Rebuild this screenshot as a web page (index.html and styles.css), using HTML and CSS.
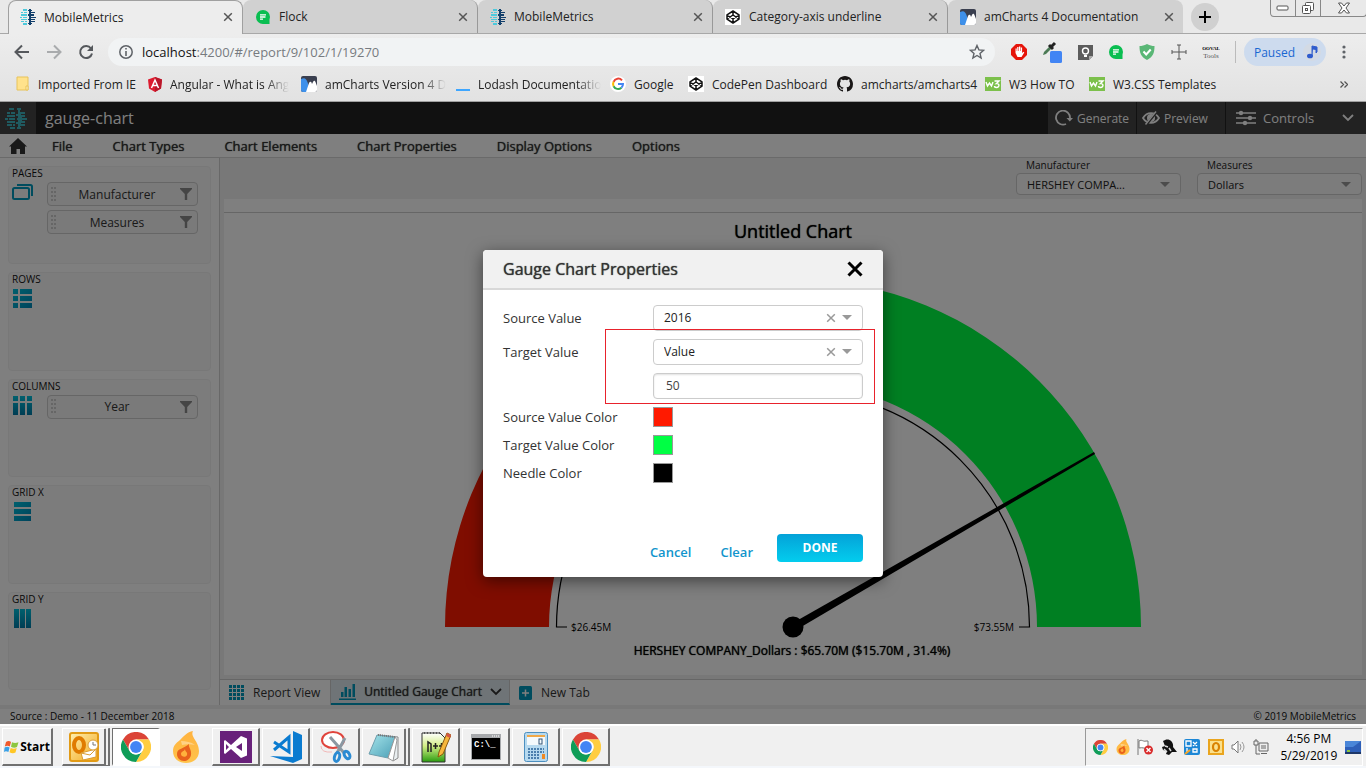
FILE: index.html
```html
<!DOCTYPE html>
<html lang="en">
<head>
<meta charset="utf-8">
<title>MobileMetrics</title>
<link rel="stylesheet" href="styles.css">
</head>
<body>
<svg class="defs" aria-hidden="true">
  <defs>
    <linearGradient id="teal" x1="0" y1="0" x2="1" y2="1"><stop offset="0" stop-color="#00c0dc"/><stop offset="1" stop-color="#0088b8"/></linearGradient>
    <linearGradient id="tealDown" x1="0" y1="0" x2="0" y2="1"><stop offset="0" stop-color="#00c0dc"/><stop offset="1" stop-color="#007ba8"/></linearGradient>
    <linearGradient id="flame" x1="0" y1="0" x2="0" y2="1"><stop offset="0" stop-color="#ffb340"/><stop offset="1" stop-color="#ffc34a"/></linearGradient>
    <linearGradient id="pad" x1="0" y1="0" x2="1" y2="1"><stop offset="0" stop-color="#a5e4ea"/><stop offset="1" stop-color="#4b9fb6"/></linearGradient>
    <linearGradient id="npp" x1="0" y1="0" x2="0" y2="1"><stop offset="0" stop-color="#fff"/><stop offset=".45" stop-color="#d2ee84"/><stop offset="1" stop-color="#2a9c10"/></linearGradient>
    <linearGradient id="gold" x1="0" y1="0" x2="1" y2="1"><stop offset="0" stop-color="#fff0b0"/><stop offset="1" stop-color="#f2a71b"/></linearGradient>
  </defs>
  <symbol id="mm" viewBox="0 0 16 16">
    <g fill="#4dc9dc"><path d="M3 0h4v2H3zM1 3h2v1H1zM4 3h3v1H4zM1 5h6v2H1zM0 8h2v1H0zM3 8h4v1H3zM1 10h6v1H1zM1 12h3v1H1zM5 12h2v1H5zM3 14h4v2H3z"/></g>
    <g fill="#123f6b"><path d="M9 0h2v16H9zM8 1h4v1H8zM11 3h4v1h-4zM8 5h6v2H8zM10 8h6v1h-6zM8 10h7v1H8zM11 12h4v1h-4zM8 14h4v1H8z"/></g>
  </symbol>
  <symbol id="mmTeal" viewBox="0 0 22 21">
    <path fill="#3fb4c0" d="M4 0h5v2H4zM2 4h3v2H2zM6 4h4v2H6zM2 7h8v2H2zM0 10h3v2H0zM4 10h6v2H4zM2 13h8v2H2zM2 16h5v2H2zM8 16h2v2H8zM5 19h5v2H5zM12 0h4v2h-1v2h5v2h-4v1h4v2h-3v1h5v2h-5v1h3v2h-4v1h4v2h-5v1h1v2h-4v-2h1v-3h-2v-2h2v-2h-1v-2h1V8h-2V6h2V2h-1z"/>
  </symbol>
  <symbol id="flock" viewBox="0 0 16 16"><path fill="#0abe51" d="M8 1a7 7 0 1 1 0 14A7 7 0 0 1 8 1zM14.500 9v6H8z"/><path stroke="#fff" stroke-width="1.300" fill="none" d="M5 5.800h6M5 8h5.500M5 10.200h3"/></symbol>
  <symbol id="codepen" viewBox="0 0 16 16"><path fill="#fff" d="M0 0h16v16H0z"/><g fill="none" stroke="#111" stroke-width="1.500" stroke-linejoin="round"><path d="M8 2l6 3.800v4.400L8 14l-6-3.800V5.800zM2 6l6 4 6-4M2 10l6-4 6 4M8 2v4M8 10v4"/></g></symbol>
  <symbol id="am" viewBox="0 0 16 16"><rect width="16" height="16" rx="2" fill="#3a3f4f"/><path d="M0 3c4-2 5 0 6 2s2 6 2.500 11H2a2 2 0 0 1-2-2z" fill="#3e90ea"/><path d="M5 16l3-9c1-2 2-1.500 2.500-.5L11 8l1-2c1-2 2-1 2.500 0L16 10v4a2 2 0 0 1-2 2z" fill="#fff"/></symbol>
  <symbol id="w3" viewBox="0 0 16 14"><rect width="16" height="14" fill="#7cc04b"/><path d="M1 5l1.500 4L4.500 6l2 3L8 5M9.500 4H14l-2.500 2.500c3-.5 3.500 4 0 4-1 0-2-.6-2-1.500" fill="none" stroke="#fff" stroke-width="1.400"/></symbol>
  <symbol id="x" viewBox="0 0 10 10"><path d="M1.200 1.200l7.600 7.600M8.800 1.200L1.200 8.800" stroke="currentColor" stroke-width="1.500"/></symbol>
  <symbol id="caret" viewBox="0 0 10 5"><path d="M0 0h10L5 5z" fill="#999"/></symbol>
  <symbol id="chev" viewBox="0 0 12 8"><path d="M1 1l5 5 5-5" fill="none" stroke="currentColor" stroke-width="1.800"/></symbol>
  <symbol id="funnel" viewBox="0 0 12 12"><path d="M0 0h12v1L7.200 6v6H4.800V6L0 1z" fill="#8a8a8a"/></symbol>
  <symbol id="grip" viewBox="0 0 6 15"><path fill="#cdcdcd" d="M0 0h2v2H0zM3 0h2v2H3zM0 4h2v2H0zM3 4h2v2H3zM0 8h2v2H0zM3 8h2v2H3zM0 12h2v2H0zM3 12h2v2H3z"/></symbol>
  <symbol id="chrome" viewBox="0 0 32 32"><path fill="#db4437" d="M2.100 8A16 16 0 0 1 29.900 8H16a8 8 0 0 0-7.500 5z"/><path fill="#db4437" d="M2.100 8L9 20l7-12z"/><path fill="#ffcd40" d="M29.900 8A16 16 0 0 1 16 32l7-12a8 8 0 0 0 0-8.500L16 8z"/><path fill="#0f9d58" d="M2.100 8A16 16 0 0 0 16 32l6.500-11.500A8 8 0 0 1 9 20z"/><circle cx="16" cy="16" r="8" fill="#fff"/><circle cx="16" cy="16" r="6.300" fill="#4285f4"/></symbol>
  <symbol id="fire" viewBox="0 0 26 32"><path fill="url(#flame)" d="M20 0c-3 6 6 10 6 20 0 8-6 12-13 12S0 28 0 20c0-5 3-8 7-11 4-4 7-8 13-9z"/><path fill="#fff" d="M8 10c5 0 10 1 14 4-4-1-9-1-13 0z" opacity=".35"/><path fill="#e8611c" d="M16 13c-1 3 3 6 2 11-1 4-4 6-7 6-4 0-7-3-7-7 0-6 7-5 12-10z"/><path fill="#ffb13d" d="M12 18c0 3 3 3 2 6-1 3-6 2-6-1s3-2 4-5z"/></symbol>
  <symbol id="outlook" viewBox="0 0 30 30"><rect x="1" y="1" width="28" height="28" rx="2" fill="url(#gold)" stroke="#e29b16" stroke-width="2"/><ellipse cx="10" cy="13" rx="5" ry="7" fill="none" stroke="#e07b00" stroke-width="4"/><path d="M12 21l15-4v8l-13 3z" fill="#fff" stroke="#d99c32"/><path d="M12 21l9 2 6-6" fill="none" stroke="#d99c32"/><circle cx="24" cy="13" r="5" fill="#fff" stroke="#d9a040"/><path d="M24 10v3h3" stroke="#777" fill="none"/></symbol>
</svg>

<div class="browser">
  <div class="tabstrip">
    <div class="tab tab-active"><svg class="i16"><use href="#mm"/></svg><span>MobileMetrics</span><button class="close" aria-label="Close tab"><svg class="i10"><use href="#x"/></svg></button></div>
    <div class="tab"><svg class="i16"><use href="#flock"/></svg><span>Flock</span><button class="close" aria-label="Close tab"><svg class="i10"><use href="#x"/></svg></button></div>
    <div class="tab"><svg class="i16"><use href="#mm"/></svg><span>MobileMetrics</span><button class="close" aria-label="Close tab"><svg class="i10"><use href="#x"/></svg></button></div>
    <div class="tab"><svg class="i16"><use href="#codepen"/></svg><span>Category-axis underline</span><button class="close" aria-label="Close tab"><svg class="i10"><use href="#x"/></svg></button></div>
    <div class="tab tab-last"><svg class="i16"><use href="#am"/></svg><span>amCharts 4 Documentation</span><button class="close" aria-label="Close tab"><svg class="i10"><use href="#x"/></svg></button></div>
    <button class="newtab" aria-label="New tab"><svg width="12" height="12" viewBox="0 0 12 12"><path d="M6 0v12M0 6h12" stroke="#000" stroke-width="2"/></svg></button>
    <div class="winbtns">
      <button aria-label="Minimize"><svg width="14" height="6" viewBox="0 0 14 6"><rect x="1" y="1" width="11" height="4" rx="1" fill="#fff" stroke="#555"/></svg></button>
      <button aria-label="Restore"><svg width="14" height="14" viewBox="0 0 14 14"><g fill="#fff" stroke="#555"><rect x="4.500" y="1.500" width="8" height="8" rx="1"/><rect x="1.500" y="4.500" width="8" height="8" rx="1"/><rect x="4.500" y="7.500" width="2" height="2"/></g></svg></button>
      <button class="winclose" aria-label="Close"><svg width="14" height="12" viewBox="0 0 14 12"><path d="M1.500 1h3L7 4l2.500-3h3L9 6l3.500 5h-3L7 8l-2.500 3h-3L5 6z" fill="#fff" stroke="#555"/></svg></button>
    </div>
  </div>

  <div class="navbar">
    <button class="nav" aria-label="Back"><svg width="16" height="16" viewBox="0 0 16 16"><path d="M15 8H2M8 1.500L1.500 8 8 14.500" fill="none" stroke="#55585c" stroke-width="2"/></svg></button>
    <button class="nav" aria-label="Forward"><svg width="16" height="16" viewBox="0 0 16 16"><path d="M1 8h13M8 1.500L14.500 8 8 14.500" fill="none" stroke="#a9abad" stroke-width="2"/></svg></button>
    <button class="nav" aria-label="Reload"><svg width="16" height="16" viewBox="0 0 16 16"><path d="M13 4.500A6 6 0 1 0 14 9.500" fill="none" stroke="#55585c" stroke-width="2"/><path d="M15 1v6H9z" fill="#55585c"/></svg></button>
    <div class="omnibox">
      <svg width="14" height="14" viewBox="0 0 14 14"><circle cx="7" cy="7" r="6.200" fill="none" stroke="#5f6368" stroke-width="1.500"/><path d="M7 6v5M7 3v1.600" stroke="#5f6368" stroke-width="1.600"/></svg>
      <span class="url"><b>localhost</b>:4200/#/report/9/102/1/19270</span>
      <svg width="16" height="16" viewBox="0 0 16 16"><path d="M8 1.500l1.900 4.400 4.700.4-3.600 3.100 1.100 4.600L8 11.500 3.900 14 5 9.400 1.400 6.300l4.700-.4z" fill="none" stroke="#5f6368" stroke-width="1.400"/></svg>
    </div>
    <div class="exts">
      <svg width="16" height="16" viewBox="0 0 16 16"><path fill="#e6140a" d="M5 0h6l5 5v6l-5 5H5l-5-5V5z"/><path fill="#fff" d="M4.500 9V4.500h1.200V7h.5V3h1.300v4H8V2.500h1.300V7h.5V3.500h1.300V9l1.400-1.200.8.800L10.500 13H6.500z"/></svg>
      <svg width="20" height="22" viewBox="0 0 20 22"><path d="M1 14l1-3 6-6 2 2-6 6z" fill="#4b7a55"/><path d="M7 4l4 4M9 6l4-4" stroke="#222" stroke-width="3"/><rect x="8" y="10" width="12" height="12" rx="1.500" fill="#4285f4"/></svg>
      <svg width="15" height="15" viewBox="0 0 15 15"><path d="M0 0h15v11l-4 4H0z" fill="#5c5c5c"/><path d="M11 15v-4h4z" fill="#aaa"/><circle cx="7.500" cy="6" r="3" fill="none" stroke="#fff" stroke-width="1.400"/><path d="M6 10h3v2H6z" fill="#fff"/></svg>
      <svg class="i16"><use href="#flock"/></svg>
      <svg width="16" height="16" viewBox="0 0 16 16"><path d="M8 0c3 1.500 5 2 7.500 2 0 7-1.500 11-7.500 14C2 13 .5 9 .5 2 3 2 5 1.500 8 0z" fill="#5ab776"/><path d="M4.500 7.500l2.700 3 4.500-5" fill="none" stroke="#fff" stroke-width="2"/></svg>
      <svg width="16" height="16" viewBox="0 0 16 16"><path d="M8 1v14M1 8h14M6 1h4M6 15h4M1 6v4M15 6v4" stroke="#555" fill="none"/></svg>
      <svg width="18" height="16" viewBox="0 0 18 16"><text x="9" y="6" class="ext-a">OOVAL</text><text x="9" y="14" class="ext-b">Tools</text></svg>
    </div>
    <button class="paused">Paused<svg width="18" height="18" viewBox="0 0 18 18"><circle cx="9" cy="9" r="9" fill="#d3dae4"/><ellipse cx="7" cy="13" rx="3" ry="2.300" fill="#2f5ccd"/><path d="M9 13V3l5 1v5l-1 1V6.500L10 6" fill="#2f5ccd" stroke="#2f5ccd"/></svg></button>
    <button class="kebab" aria-label="Menu"><svg width="4" height="14" viewBox="0 0 4 14"><g fill="#5f6368"><circle cx="2" cy="2" r="1.600"/><circle cx="2" cy="7" r="1.600"/><circle cx="2" cy="12" r="1.600"/></g></svg></button>
  </div>

  <nav class="bookmarks">
    <a href="#"><svg width="14" height="16" viewBox="0 0 14 16"><path d="M1 1h11v13H1z" fill="#ffe28c" stroke="#e8c35a"/><path d="M10 10h2v4h-2z" fill="#fff3c4" stroke="#e8c35a"/></svg><span>Imported From IE</span></a>
    <a href="#"><svg width="14" height="15" viewBox="0 0 14 15"><path d="M7 0l7 2.500-1 9L7 15l-6-3.500-1-9z" fill="#dd1b2f"/><path d="M7 0l7 2.500-1 9L7 15z" fill="#b8172a"/><path d="M3.500 11L7 3l3.500 8M4.800 8.500h4.400" fill="none" stroke="#fff" stroke-width="1.500"/></svg><span class="fade">Angular - What is Ang</span></a>
    <a href="#"><svg class="i16"><use href="#am"/></svg><span class="fade">amCharts Version 4 D</span></a>
    <a href="#"><svg width="14" height="16" viewBox="0 0 14 16"><path d="M0 14h14" stroke="#3ea6ff" stroke-width="2"/></svg><span class="fade">Lodash Documentatio</span></a>
    <a href="#"><svg width="16" height="16" viewBox="0 0 16 16"><circle cx="8" cy="8" r="8" fill="#fff"/><g fill="none" stroke-width="2"><path d="M12 4.300A5 5 0 0 0 3.600 5.800" stroke="#ea4335"/><path d="M3.600 5.800a5 5 0 0 0 0 4.400" stroke="#fbbc05"/><path d="M3.600 10.200a5 5 0 0 0 7.800 1.500" stroke="#34a853"/><path d="M11.400 11.700A5 5 0 0 0 13 8H8" stroke="#4285f4"/></g></svg><span>Google</span></a>
    <a href="#"><svg class="i16"><use href="#codepen"/></svg><span>CodePen Dashboard</span></a>
    <a href="#"><svg width="16" height="16" viewBox="0 0 16 16"><path fill="#191717" d="M8 0C3.580 0 0 3.580 0 8c0 3.540 2.290 6.530 5.470 7.590.4.070.55-.17.55-.38 0-.19-.01-.82-.01-1.490-2.010.37-2.530-.49-2.690-.94-.09-.23-.48-.94-.82-1.130-.28-.15-.68-.52-.01-.53.63-.01 1.080.58 1.230.82.720 1.210 1.870.87 2.330.66.070-.52.280-.87.510-1.070-1.780-.2-3.640-.89-3.640-3.950 0-.87.310-1.590.82-2.150-.08-.2-.36-1.020.08-2.120 0 0 .67-.21 2.200.82a7.600 7.600 0 0 1 4 0c1.530-1.040 2.200-.82 2.200-.82.440 1.100.16 1.920.08 2.120.51.560.82 1.270.82 2.150 0 3.070-1.870 3.750-3.650 3.950.29.250.54.730.54 1.480 0 1.070-.01 1.930-.01 2.200 0 .21.150.46.550.38A8.010 8.010 0 0 0 16 8c0-4.420-3.580-8-8-8z"/></svg><span>amcharts/amcharts4</span></a>
    <a href="#"><svg width="16" height="14"><use href="#w3"/></svg><span>W3 How TO</span></a>
    <a href="#"><svg width="16" height="14"><use href="#w3"/></svg><span>W3.CSS Templates</span></a>
    <button class="more" aria-label="More bookmarks"><svg width="8" height="7" viewBox="0 0 8 7"><path d="M.5.500l3 3-3 3M4.500.500l3 3-3 3" fill="none" stroke="#555" stroke-width="1.300"/></svg></button>
  </nav>
</div>

<div class="app">
  <header class="topbar">
    <div class="logo"><svg width="22" height="21"><use href="#mmTeal"/></svg></div>
    <h1>gauge-chart</h1>
    <button class="tb"><svg width="18" height="16" viewBox="0 0 18 16"><path d="M11 14A7 7 0 1 1 15 8" fill="none" stroke="currentColor" stroke-width="1.800"/><path d="M11.500 8H18l-3.200 3.500z" fill="currentColor"/></svg>Generate</button>
    <button class="tb tb-preview"><svg width="18" height="14" viewBox="0 0 18 14"><path d="M1 7c4-6.500 12-6.500 16 0-4 6.500-12 6.500-16 0z" fill="none" stroke="currentColor" stroke-width="1.800"/><circle cx="9" cy="7" r="4" fill="currentColor"/><path d="M3.500 14.500L15.500 0" stroke="#444" stroke-width="2.500"/><path d="M3.500 13.500L14 .5" stroke="currentColor" stroke-width="1.400"/></svg>Preview</button>
    <button class="tb tb-controls"><svg width="20" height="16" viewBox="0 0 20 16"><path d="M0 3h20M0 8h20M0 13h20" stroke="currentColor" stroke-width="1.500"/><g fill="currentColor"><circle cx="5" cy="3" r="2.200"/><circle cx="14" cy="8" r="2.200"/><circle cx="9" cy="13" r="2.200"/></g></svg><span>Controls</span><svg width="12" height="8"><use href="#chev"/></svg></button>
  </header>

  <nav class="menubar">
    <a class="home" href="#" aria-label="Home"><svg width="18" height="16" viewBox="0 0 18 16"><path d="M9 0l9 8.500h-2V16h-5v-5H7.500v5H2V8.500H0z" fill="#333"/></svg></a>
    <a href="#">File</a><a href="#">Chart Types</a><a href="#">Chart Elements</a><a href="#">Chart Properties</a><a href="#">Display Options</a><a href="#">Options</a>
  </nav>

  <div class="work">
    <aside class="sidebar">
      <section class="zone"><h2>PAGES</h2><div class="zone-body">
        <svg width="22" height="20" viewBox="0 0 22 20"><rect x="1" y="6" width="16" height="11" rx="1.500" fill="none" stroke="#0099bd" stroke-width="2"/><path d="M5 3h13.500a1.500 1.500 0 0 1 1.500 1.500V14" fill="none" stroke="#0099bd" stroke-width="2"/></svg>
        <div class="chips"><div class="chip"><svg width="6" height="15"><use href="#grip"/></svg><span>Manufacturer</span><svg width="12" height="12"><use href="#funnel"/></svg></div>
        <div class="chip"><svg width="6" height="15"><use href="#grip"/></svg><span>Measures</span><svg width="12" height="12"><use href="#funnel"/></svg></div></div>
      </div></section>
      <section class="zone"><h2>ROWS</h2><div class="zone-body">
        <svg width="22" height="20" viewBox="0 0 22 20"><path fill="url(#teal)" d="M1 1h5v5H1zM8 1h12v5H8zM1 8h5v5H1zM8 8h12v5H8zM1 15h5v5H1zM8 15h12v5H8z"/></svg>
      </div></section>
      <section class="zone"><h2>COLUMNS</h2><div class="zone-body">
        <svg width="22" height="20" viewBox="0 0 22 20"><path fill="url(#tealDown)" d="M1 1h5v5H1zM8 1h5v5H8zM15 1h5v5h-5zM1 8h5v12H1zM8 8h5v12H8zM15 8h5v12h-5z"/></svg>
        <div class="chips"><div class="chip"><svg width="6" height="15"><use href="#grip"/></svg><span>Year</span><svg width="12" height="12"><use href="#funnel"/></svg></div></div>
      </div></section>
      <section class="zone"><h2>GRID X</h2><div class="zone-body">
        <svg width="22" height="20" viewBox="0 0 22 20"><path fill="url(#teal)" d="M2 1h17v5H2zM2 8h17v5H2zM2 15h17v5H2z"/></svg>
      </div></section>
      <section class="zone"><h2>GRID Y</h2><div class="zone-body">
        <svg width="22" height="20" viewBox="0 0 22 20"><path fill="url(#tealDown)" d="M2 1h5v19H2zM8 1h5v19H8zM14 1h5v19h-5z"/></svg>
      </div></section>
    </aside>

    <main class="main">
      <div class="filters">
        <div class="filter"><label for="f1">Manufacturer</label><div class="pick"><select id="f1"><option>HERSHEY COMPA...</option></select><svg width="10" height="5"><use href="#caret"/></svg></div></div>
        <div class="filter"><label for="f2">Measures</label><div class="pick"><select id="f2"><option>Dollars</option></select><svg width="10" height="5"><use href="#caret"/></svg></div></div>
      </div>
      <div class="canvas">
        <svg class="gauge" viewBox="0 0 1138 462" role="img" aria-label="Gauge chart">
          <path d="M221 414A348 348 0 0 1 569 66V170A244 244 0 0 0 325 414z" fill="#ff1a00"/>
          <path d="M569 66A348 348 0 0 1 917 414H813A244 244 0 0 0 569 170z" fill="#00ff44"/>
          <path d="M343 414H332.500A236.500 236.500 0 0 1 805.500 414H795" fill="none" stroke="#000" stroke-width="1.200"/>
          <path d="M567 411L870 239l1 2L572 417z" fill="#000"/>
          <circle cx="569" cy="414" r="10.500"/>
          <text x="569" y="25" class="g-title">Untitled Chart</text>
          <text x="347" y="418" class="g-tick">$26.45M</text>
          <text x="790" y="418" class="g-tick g-end">$73.55M</text>
          <text x="568" y="442" class="g-note">HERSHEY COMPANY_Dollars : $65.70M ($15.70M , 31.4%)</text>
        </svg>
      </div>
      <div class="sheets">
        <button class="sheet"><svg width="15" height="15" viewBox="0 0 15 15"><path fill="#0099bd" d="M0 0h3v3H0zM4 0h3v3H4zM8 0h3v3H8zM12 0h3v3h-3zM0 4h3v3H0zM4 4h3v3H4zM8 4h3v3H8zM12 4h3v3h-3zM0 8h3v3H0zM4 8h3v3H4zM8 8h3v3H8zM12 8h3v3h-3zM0 12h3v3H0zM4 12h3v3H4zM8 12h3v3H8zM12 12h3v3h-3z"/></svg>Report View</button>
        <button class="sheet sheet-on"><svg width="17" height="16" viewBox="0 0 17 16"><path fill="#0099bd" d="M2 8h2.500v5H2zM5.500 3H8v10H5.500zM9.500 5H12v8H9.500zM13.500 0H16v13h-2.500zM0 14.500h17V16H0z"/></svg>Untitled Gauge Chart<svg width="12" height="8"><use href="#chev"/></svg></button>
        <button class="sheet sheet-new"><svg width="13" height="14" viewBox="0 0 13 14"><rect width="13" height="14" rx="1.500" fill="#0099bd"/><path d="M6.500 3.500v7M3 7h7" stroke="#fff" stroke-width="1.500"/></svg>New Tab</button>
      </div>
    </main>
  </div>
  <footer class="foot"><span>Source : Demo - 11 December 2018</span><span>© 2019 MobileMetrics</span></footer>

  <div class="overlay">
    <form class="modal" role="dialog" aria-labelledby="mt">
      <div class="modal-head"><h2 id="mt">Gauge Chart Properties</h2><button type="button" class="m-close" aria-label="Close"><svg width="16" height="16" viewBox="0 0 16 16"><path d="M1.500 1.500l13 13M14.500 1.500l-13 13" stroke="#000" stroke-width="3"/></svg></button></div>
      <div class="modal-body">
        <div class="row"><label for="sv">Source Value</label><div class="pick m-pick"><select id="sv"><option>2016</option></select><svg class="i10 clear"><use href="#x"/></svg><svg width="10" height="5"><use href="#caret"/></svg></div></div>
        <div class="row"><label for="tv">Target Value</label><div class="pick m-pick"><select id="tv"><option>Value</option></select><svg class="i10 clear"><use href="#x"/></svg><svg width="10" height="5"><use href="#caret"/></svg></div></div>
        <div class="row"><span></span><input class="num" type="text" value="50" aria-label="Target number"></div>
        <div class="row row-color"><label for="c1">Source Value Color</label><input id="c1" type="color" value="#ff1a00"></div>
        <div class="row row-color"><label for="c2">Target Value Color</label><input id="c2" type="color" value="#00ff44"></div>
        <div class="row row-color"><label for="c3">Needle Color</label><input id="c3" type="color" value="#000000"></div>
      </div>
      <div class="modal-foot"><button type="button" class="link">Cancel</button><button type="button" class="link">Clear</button><button type="button" class="done">DONE</button></div>
      <div class="marker"></div>
    </form>
  </div>
</div>

<div class="taskbar">
  <button class="task start"><svg width="15" height="14" viewBox="0 0 15 14"><path d="M2 2c2-1.500 4-1 5 0L5.800 6.500c-2-1-3-1-5 0z" fill="#f0592b"/><path d="M8 2.300c2 1 4 1 6.500 0L13 7c-2 1-4 .8-6-.2z" fill="#8cc63f"/><path d="M.6 7.500c2-1 3.500-.8 5 0L4.400 12c-2-1-3-1-4.400 0z" fill="#3aa0e6"/><path d="M6.700 7.900c2 1 4 1 6 0L11.500 12.500c-2 1-4 .8-6-.2z" fill="#ffc726"/></svg>Start</button>
  <div class="tasks">
    <button class="task stack" aria-label="Outlook"><svg width="30" height="30"><use href="#outlook"/></svg></button>
    <button class="task pressed" aria-label="Chrome"><svg width="30" height="30"><use href="#chrome"/></svg></button>
    <button class="task flat" aria-label="Flame"><svg width="26" height="32"><use href="#fire"/></svg></button>
    <button class="task" aria-label="Visual Studio"><svg width="32" height="32" viewBox="0 0 32 32"><path d="M0 0h32v32H0z" fill="#68217a"/><path d="M4 10l1-1 6 5 10-9 6 2.500v17L21 27l-10-9-6 5-1-1zM22 12l-6 4 6 4zM6 13v6l3-3z" fill="#fff" fill-rule="evenodd"/></svg></button>
    <button class="task" aria-label="VS Code"><svg width="32" height="32" viewBox="0 0 32 32"><path d="M23 0l9 4v24l-9 4L0 25l23 1z" fill="#0a7bd0"/><path d="M4 11l15 10V6L4 19" fill="none" stroke="#0a7bd0" stroke-width="3"/></svg></button>
    <button class="task" aria-label="Snipping Tool"><svg width="32" height="32" viewBox="0 0 32 32"><ellipse cx="13" cy="9" rx="11" ry="8" fill="#fff" stroke="#e0443c" stroke-width="2"/><path d="M1 15q0 7 11 6" stroke="#f2b8b8" fill="none"/><path d="M10 6l15 17M25 7L17 22" stroke="#8b98a2" stroke-width="3"/><g fill="none" stroke="#2b8bd3" stroke-width="3"><ellipse cx="17" cy="26" rx="2.500" ry="4.500" transform="rotate(15 17 26)"/><ellipse cx="27" cy="24" rx="2.500" ry="4" transform="rotate(-30 27 24)"/></g></svg></button>
    <button class="task stack" aria-label="Notepad"><svg width="32" height="30" viewBox="0 0 32 30"><path d="M10 3l20 2v21l-5 3z" fill="#e9eef0" stroke="#8a8a8a"/><path d="M9 3l18 2-7 21L1 22z" fill="url(#pad)" stroke="#6d9fae"/><path d="M20 26l5 3 4-21-2-3z" fill="#fff" stroke="#999"/><path d="M10 3l17 2" stroke="#777" stroke-width="2" stroke-dasharray="1 1"/></svg></button>
    <button class="task" aria-label="Notepad++"><svg width="30" height="32" viewBox="0 0 30 32"><path d="M1 2h18l5 5v24H1z" fill="url(#npp)" stroke="#333"/><path d="M3 2h16" stroke="#555" stroke-width="2" stroke-dasharray="1 2"/><path d="M7 21V11l3 2v8M12 15h5M14.500 12v6M18 15h5M20.500 12v6" fill="none" stroke="#222" stroke-width="1.500"/><path d="M17 26l1-5 8-19 4 2-8 19z" fill="#f6b73c" stroke="#8a5a10"/><path d="M26 2l4 2-1 3-4-2z" fill="#d65745"/></svg></button>
    <button class="task" aria-label="Command Prompt"><svg width="30" height="26" viewBox="0 0 30 26"><path d="M0 0h30v26H0z" fill="#a7a9ac"/><path d="M1 4h28v21H1z" fill="#000"/><path d="M21 2h7" stroke="#fff" stroke-dasharray="1 1"/><text x="3" y="13" class="cmd">C:\_</text></svg></button>
    <button class="task" aria-label="Calculator"><svg width="24" height="30" viewBox="0 0 24 30"><rect x=".5" y=".5" width="23" height="29" rx="2" fill="#b6d9ef" stroke="#4c8fc0"/><rect x="3" y="3" width="18" height="10" fill="#f4f9fc"/><path d="M3 3h18v2H3z" fill="#f0a848"/><rect x="15" y="7" width="3" height="5" fill="none" stroke="#357"/><g stroke-width="2" stroke="#4b7fae" stroke-dasharray="2 1"><path d="M4 17h16M4 20h16M4 23h12M4 26h12"/></g><path d="M18 22h3v5h-3z" fill="#f08a24"/></svg></button>
    <button class="task" aria-label="Chrome"><svg width="30" height="30"><use href="#chrome"/></svg></button>
  </div>
  <div class="tray">
    <svg width="15" height="15"><use href="#chrome"/></svg>
    <svg width="14" height="16"><use href="#fire"/></svg>
    <svg width="16" height="16" viewBox="0 0 16 16"><path d="M1 0v16M2 2c3-2 4 1 7 0h2v7c-3 1-5-1-9 0z" fill="#fff" stroke="#777"/><circle cx="11.500" cy="11" r="4.500" fill="#d92b2b"/><path d="M9.500 9l4 4M13.500 9l-4 4" stroke="#fff" stroke-width="1.400"/></svg>
    <svg width="16" height="16" viewBox="0 0 16 16"><path d="M2 2c5-4 11 0 10 6l4 5-5 0-3 3-3-1 1-3-4-1-1-3 3-1z" fill="#111"/><path d="M4 7l3 1M3 10l3 3M8 9l2 3" stroke="#ddd" stroke-width="1.500"/></svg>
    <svg width="16" height="16" viewBox="0 0 16 16"><rect width="16" height="16" rx="2" fill="#1c87d6"/><path d="M2 2h5v5H2zM9 3l4 4M13 3L9 7M3 9v5M9 10h4v3H9z" fill="none" stroke="#fff" stroke-width="1.300"/><path d="M1 15l5-4" stroke="#f6a52a" stroke-width="2"/></svg>
    <svg width="16" height="16" viewBox="0 0 16 16"><rect x="1" y="1" width="14" height="14" fill="#fbe08c" stroke="#eaa51e" stroke-width="2"/><ellipse cx="8" cy="8" rx="3" ry="4" fill="none" stroke="#d98200" stroke-width="2.200"/></svg>
    <svg width="14" height="14" viewBox="0 0 14 14"><path d="M1 5h2l4-4v12L3 9H1z" fill="#fff" stroke="#777"/><path d="M9 4q2 3 0 6M11 2q4 5 0 10" fill="none" stroke="#999"/></svg>
    <svg width="16" height="16" viewBox="0 0 16 16"><path d="M6 4h9v8H6zM8 14.500h6M1 2h4v4H1zM3 0v2M3 6v9h4" fill="#eee" stroke="#666"/><path d="M8 6h5v4H8z" fill="#aaa"/></svg>
    <div class="clock"><span>4:56 PM</span><span>5/29/2019</span></div>
    <svg width="16" height="13" viewBox="0 0 16 13"><path d="M0 0h16v11H0z" fill="#2e5fb8"/><path d="M0 0h16L8 6H0z" fill="#4a86d8"/><path d="M0 11h16v2H0z" fill="#1d3769"/><path d="M2 9h3v2H2z" fill="#8cc63f"/></svg>
  </div>
</div>
</body>
</html>
```
FILE: styles.css
```css
* { box-sizing: border-box; }
body { margin: 0; height: 100vh; display: flex; flex-direction: column; overflow: hidden; font-family: "Open Sans", "Noto Sans", sans-serif; font-size: 12px; color: #222; }
button { font: inherit; color: inherit; border: 0; background: none; padding: 0; display: flex; align-items: center; justify-content: center; white-space: nowrap; }
a { color: inherit; text-decoration: none; }
h1, h2 { margin: 0; font-weight: 400; }
svg { flex: none; display: block; }
.defs { position: absolute; width: 0; height: 0; }
.i16 { width: 16px; height: 16px; }
.i10 { width: 10px; height: 10px; }

/* Browser window */
.browser { background: linear-gradient(#e9e9e9 34px, #ededed 34px, #e2e2e2); border-bottom: 1px solid #a0a0a0; }
.tabstrip { height: 34px; display: flex; padding-left: 8px; border-bottom: 1px solid #a8a8a8; }
.tab { flex: 0 1 235px; display: flex; align-items: center; gap: 8px; padding: 0 9px 0 12px; background: #d1d1d1; border-right: 1px solid #999; border-radius: 8px 8px 0 0; color: #222; }
.tab span { flex: 1; white-space: nowrap; overflow: hidden; }
.tab-active { background: #ededed; border: 1px solid #a0a0a0; border-bottom: 0; padding: 0 9px 1px 11px; margin-bottom: -1px; }
.tab-last { border-right: 0; }
.close { width: 10px; height: 10px; color: #555; }
.newtab { width: 28px; height: 28px; margin: 3px 0 0 8px; border-radius: 50%; background: #d0d0d0; }
.winbtns { margin-left: auto; height: 17px; display: flex; border: 1px solid #888; border-top: 0; border-radius: 0 0 4px 4px; margin-right: -1px; width: 97px; }
.winbtns button { width: 25px; border-right: 1px solid #888; }
.winbtns .winclose { flex: 1; border: 0; }
.navbar { height: 36px; padding: 4px 20px 4px 6px; display: flex; align-items: center; }
.nav { width: 32px; height: 28px; }
.omnibox { flex: 1; height: 28px; margin-left: 6px; padding: 0 10px 0 11px; border-radius: 14px; background: #f1f3f4; display: flex; align-items: center; gap: 9px; }
.url { flex: 1; font-size: 13px; color: #777b80; }
.url b { font-weight: 400; color: #111; }
.exts { display: flex; align-items: center; justify-content: space-between; width: 225px; height: 22px; margin: 0 8px 0 16px; padding-right: 15px; border-right: 1px solid #bbb; }
.ext-a { font: bold 5px "Liberation Serif", serif; text-anchor: middle; }
.ext-b { font: 7px "Liberation Serif", serif; text-anchor: middle; fill: #555; }
.paused { height: 28px; padding: 0 5px 0 10px; gap: 8px; border-radius: 14px; background: #cddbee; color: #1967d2; }
.kebab { margin-left: 16px; width: 4px; }
.bookmarks { height: 31px; padding: 0 18px 3px 16px; display: grid; grid-template-columns: 132px 153px 155px 154px 78px 149px 148px 104px 1fr auto; align-items: center; color: #222; }
.bookmarks a { display: flex; align-items: center; gap: 8px; min-width: 0; white-space: nowrap; }
.bookmarks .fade { mask-image: linear-gradient(to right, #000 80%, transparent); }

/* Application */
.app { flex: 1; min-height: 0; position: relative; display: flex; flex-direction: column; background: #fff; }
.topbar { height: 32px; flex: none; display: flex; background: #222; color: #fff; }
.logo { width: 36px; background: #444; display: grid; place-items: center; padding-right: 4px; }
.topbar h1 { flex: 1; padding-left: 9px; font-size: 16px; line-height: 32px; }
.tb { background: #444; width: 88px; gap: 4px; font-size: 12px; margin-right: 1px; }
.tb-preview { justify-content: flex-start; padding-left: 5px; }
.tb-controls { width: 140px; margin: 0; padding: 0 12px 0 10px; gap: 7px; font-size: 13px; }
.tb-controls span { flex: 1; text-align: left; }
.menubar { height: 24px; flex: none; display: flex; align-items: center; gap: 40px; padding-left: 9px; border-bottom: 1px solid #d4d4d4; font-size: 13px; font-weight: 500; color: #333; text-shadow: 0 0 1px currentColor; }
.home { margin-right: -15px; }
.work { flex: 1; min-height: 0; display: flex; }
.sidebar { width: 220px; flex: none; display: flex; flex-direction: column; gap: 8px; padding: 8px 8px 15px; border-right: 1px solid #d0d0d0; }
.zone { flex: 1; background: #f9f9f9; border: 1px solid #f0f0f0; border-radius: 4px; padding: 0 12px 0 3px; }
.zone h2 { font-size: 10px; line-height: 13px; color: #111; }
.zone-body { display: flex; gap: 13px; padding-top: 2px; }
.chips { flex: 1; display: grid; gap: 4px; }
.chip { height: 24px; border: 1px solid #ccc; border-radius: 4px; background: #f4f4f4; display: flex; align-items: center; padding: 0 5px 0 3px; color: #333; font-size: 12px; }
.chip span { flex: 1; text-align: center; padding-right: 3px; }
.main { flex: 1; min-width: 0; display: flex; flex-direction: column; background: #f0f0f0; }
.filters { height: 41px; flex: none; display: flex; justify-content: flex-end; gap: 16px; padding: 0 4px; }
.filter { width: 165px; font-size: 10px; }
.filter label { display: block; padding-left: 10px; line-height: 15px; }
.pick { display: flex; align-items: center; border: 1px solid #ccc; border-radius: 4px; background: #fff; padding-right: 10px; }
.pick select { flex: 1; min-width: 0; appearance: none; border: 0; background: none; padding: 0 10px; font: 500 12px "Open Sans", sans-serif; color: #222; outline: 0; }
.filter .pick { height: 22px; background: #f8f8f8; }
.filter .pick select { font-size: 11px; }
.canvas { flex: 1; min-height: 0; margin: 0 4px 4px; padding-top: 13px; background: #fff; display: flex; }
.gauge { width: 100%; height: 100%; border-top: 1px solid #ccc; }
.g-title { font-size: 18px; font-weight: 500; text-anchor: middle; text-shadow: 0 0 1px #000; }
.g-tick { font-size: 10px; }
.g-end { text-anchor: end; }
.g-note { font-size: 12px; font-weight: 500; text-anchor: middle; text-shadow: 0 0 1px #000; }
.sheets { height: 26px; flex: none; display: flex; background: #fff; border-top: 1px solid #ccc; color: #333; }
.sheet { padding: 0 10px 0 9px; gap: 9px; border-right: 1px solid #ccc; }
.sheet-on { background: #dfe9ee; border-bottom: 2px solid #0099bd; padding: 0 7px 0 8px; gap: 8px; font-weight: 500; text-shadow: 0 0 1px currentColor; }
.sheet-new { border: 0; }
.foot { height: 19px; flex: none; padding: 0 10px; border-top: 4px solid #f0f0f0; display: flex; justify-content: space-between; font-size: 10px; line-height: 15px; font-weight: 500; color: #111; }

/* Dialog */
.overlay { position: absolute; inset: 0; background: rgba(0, 0, 0, .5); display: grid; place-items: center; }
.modal { position: relative; width: 400px; background: #fff; border-radius: 4px; box-shadow: 0 4px 16px rgba(0, 0, 0, .5); font-size: 13px; color: #333; }
.modal-head { height: 40px; display: flex; align-items: center; justify-content: space-between; padding: 0 20px; background: #f1f1f1; border-bottom: 2px solid #d8d8d8; border-radius: 4px 4px 0 0; }
.modal-head h2 { font-size: 16px; font-weight: 500; text-shadow: 0 0 1px currentColor; }
.modal-body { display: flex; flex-direction: column; gap: 8px; padding: 15px 20px 0; }
.row { display: grid; grid-template-columns: 150px 1fr; align-items: center; }
.m-pick, .num { height: 26px; }
.clear { color: #999; margin-right: 6px; }
.num { width: 100%; border: 1px solid #ccc; border-radius: 4px; padding: 0 12px; font: 12px "Open Sans", sans-serif; color: #444; box-shadow: inset 0 1px 2px rgba(0, 0, 0, .12); }
.row-color { height: 20px; }
.row-color input { width: 20px; height: 20px; padding: 0; border: 1px solid #999; background: none; appearance: none; }
.row-color input::-webkit-color-swatch-wrapper { padding: 0; }
.row-color input::-webkit-color-swatch { border: 0; }
.modal-foot { display: flex; justify-content: flex-end; gap: 29px; padding: 51px 20px 15px; }
.link { color: #1295cc; font-weight: 600; font-size: 13px; padding-top: 8px; }
.done { width: 86px; height: 28px; margin-left: -5px; border-radius: 4px; background: linear-gradient(#04a2d8, #03cdee); color: #fff; font-size: 12px; font-weight: 700; }
.marker { position: absolute; left: 122px; top: 79px; width: 270px; height: 75px; border: 1px solid #e8222c; pointer-events: none; }

/* Taskbar */
.taskbar { height: 44px; flex: none; display: flex; align-items: center; padding: 3px 3px 1px 2px; background: #f0f0f0; border-top: 2px solid #fff; border-bottom: 2px solid #f4f7fb; color: #000; }
.task { width: 48px; height: 38px; background: #f0f0f0; border: solid; border-width: 1px 2px 2px 1px; border-color: #fff #707070 #707070 #fff; }
.start { width: 51px; gap: 1px; font-weight: 700; font-size: 12px; }
.tasks { flex: 1; display: flex; gap: 2px; margin-left: 9px; }
.stack { border-right: 6px double #707070; }
.pressed { background: #fff; border-color: #707070 #fff #fff #707070; }
.flat { border-color: transparent; }
.cmd { font: bold 9px "Liberation Mono", monospace; fill: #fff; }
.tray { height: 38px; width: 278px; display: flex; align-items: center; justify-content: space-between; padding: 0 1px 0 7px; border: 1px solid #999; border-right-color: #fff; border-bottom-color: #fff; }
.clock { display: grid; gap: 1px; margin-left: 4px; text-align: center; line-height: 16px; }
```
